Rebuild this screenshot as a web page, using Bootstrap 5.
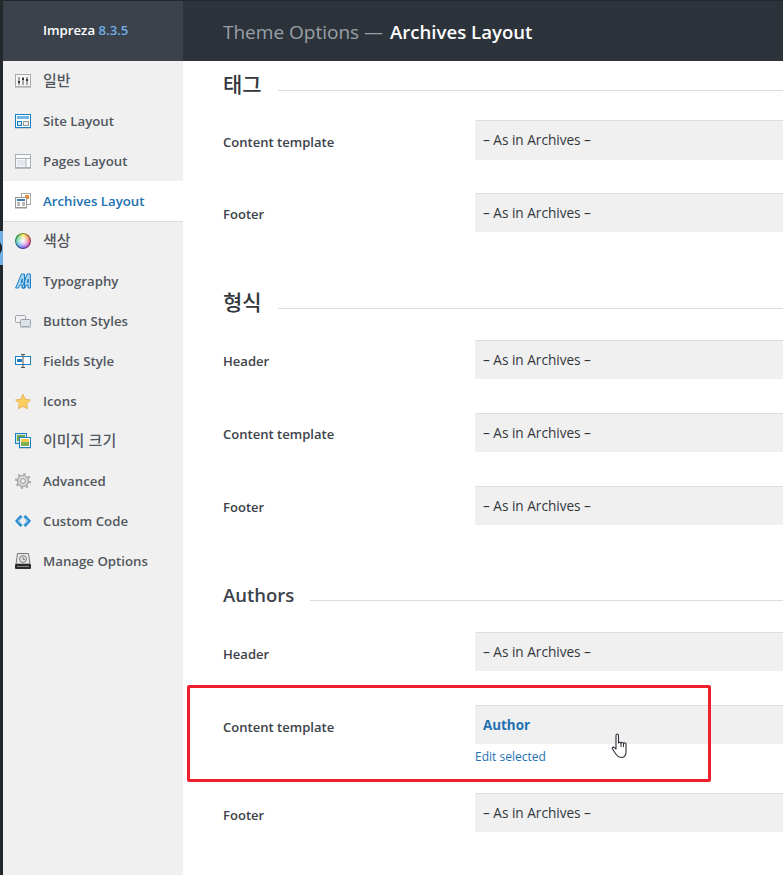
<!doctype html>
<html lang="ko"><head><meta charset="utf-8"><title>Theme Options</title>
<link href="https://cdn.jsdelivr.net/npm/bootstrap@5.3.0/dist/css/bootstrap.min.css" rel="stylesheet">
<style>
html,body{height:875px;overflow:hidden}
body{background:#fff;font-family:"Open Sans","Noto Sans CJK KR",sans-serif;color:#32373c;font-size:13px;position:relative}
.shell{height:875px;width:783px}
.wpbar{width:3px;flex:none;background:#23282d;position:relative}
.wpmark{position:absolute;left:0;top:231px;width:3px;height:34px;background:#72aee6;clip-path:polygon(0 0,100% 0,100% 100%,0 100%,0 23px,2px 19px,2px 15px,0 11px)}
.sidenav{width:180px;flex:none;background:#f0f0f0}
.logobox{height:61px;background:#3b424b;border-top:1px solid #23282d;color:#fff;font-weight:600;font-size:13.2px;padding-left:40px}
.logobox span{color:#72aee6}
.sideitem{height:40px;padding-left:12px;gap:12px;color:#50575e;font-weight:600;font-size:13.25px;text-decoration:none}
.sideitem svg,.wheel{flex:none}
.sideitem span{padding-top:1px}
.sideitem.is-on{background:#fff;color:#2271b1}
.sideitem span.ko{font-family:"Noto Sans CJK KR",sans-serif;font-weight:500;font-size:15px;margin-top:-2px;padding-top:0}
.sideitem span.wheel{width:16px;height:16px;border-radius:50%;padding:0;background:radial-gradient(circle,#fff 0,rgba(255,255,255,.65) 35%,rgba(255,255,255,0) 75%),conic-gradient(#f8e020,#f08020,#e82050,#b020c0,#5030e0,#2080e0,#20c0a0,#40c040,#f8e020);box-shadow:inset 0 0 0 1px rgba(40,40,40,.55)}
.divline{height:1px;background:#dcdcde;margin-bottom:-1px;position:relative}
.mainarea{min-width:0;flex:1 1 auto}
.topbar{height:61px;background:#2c333b;border-top:1px solid #23282d;padding:2px 0 0 40px;font-size:19px;color:#9aa0a6;white-space:nowrap}
.topbar b{color:#fff;font-weight:600;font-size:18.6px;margin-left:2px}
.body-pad{padding-left:40px}
.secttl{font-size:18.5px;font-weight:600;color:#3c434a;line-height:24px;gap:16px}
.secttl::after{content:"";flex:1;height:1px;background:#dcdcde;margin-top:17px}
.secttl.kr{font-family:"Noto Sans CJK KR",sans-serif;font-weight:500;font-size:21px;color:#32373c}
.secttl.kr::after{margin-top:19px}
.optrow{height:73px}
.optlabel{width:252px;flex:none;font-weight:600;font-size:13.05px;color:#3c434a;padding-top:13px}
.optlabel.nudge{padding-top:12px}
.fakeselect{height:39px;flex:1;background:#f0f0f0;border-top:1px solid #dcdcde;border-radius:2px 0 0 2px;padding:0 8px;color:#32373c;font-size:13.6px}
.fakeselect.tall{height:40px}
.fakeselect.pick{color:#2271b1;font-weight:700;font-size:13.4px}
.editlink{color:#2271b1;text-decoration:none;font-size:12px;line-height:16px;display:block;margin-top:5px}
.redbox{position:absolute;left:187px;top:685px;width:524px;height:97px;border:3px solid #f01f2d;border-radius:2px;pointer-events:none}
.handptr{position:absolute;left:611px;top:733px}
</style></head><body>
<div class="shell d-flex">
<div class="wpbar"><div class="wpmark"></div></div>
<nav class="sidenav">
<div class="logobox d-flex align-items-center">Impreza&nbsp;<span>8.3.5</span></div>
<a class="sideitem d-flex align-items-center" href="#"><svg width="16" height="14" viewBox="0 0 16 14"><rect x=".5" y=".5" width="15" height="12" fill="#f7f7f7" stroke="#aaa"/><rect y="13" width="16" height="1" fill="#c8c8c8"/><path d="M4 3v8M8 3v8M12 3v8" stroke="#555"/><path d="M3 7h2v2H3zM7 4h2v2H7zM11 5h2v2h-2z" fill="#333"/></svg><span class="ko">일반</span></a>
<a class="sideitem d-flex align-items-center" href="#"><svg width="16" height="15" viewBox="0 0 16 15"><rect x=".5" y=".5" width="15" height="13" fill="#fff" stroke="#1b7fc4"/><rect x="2" y="2" width="12" height="3" fill="#6fb7e8"/><rect x="2.500" y="7.500" width="4" height="4" fill="#cfe6f6" stroke="#1b7fc4"/><rect x="8.500" y="7.500" width="5" height="4" fill="#eee" stroke="#999"/><rect y="14" width="16" height="1" fill="#ccc"/></svg><span>Site Layout</span></a>
<a class="sideitem d-flex align-items-center" href="#"><svg width="16" height="15" viewBox="0 0 16 15"><rect x=".5" y=".5" width="15" height="13" fill="#fafafa" stroke="#a7aeb6"/><path d="M1 4.500h14M11 5v8" stroke="#a7aeb6"/><rect x="2" y="6" width="8" height="6" fill="#e4e8ee"/><rect y="14" width="16" height="1" fill="#bbb"/></svg><span>Pages Layout</span></a>
<a class="sideitem is-on d-flex align-items-center" href="#"><svg width="16" height="16" viewBox="0 0 16 16"><rect x="6.500" y=".5" width="9" height="11" fill="#fff" stroke="#aaa"/><rect x="10" y="2" width="4" height="4" fill="#e8902c"/><rect x=".5" y="4.500" width="11" height="10" fill="#fff" stroke="#999"/><rect x="2" y="6" width="8" height="2" fill="#3d78b8"/><path d="M2 10h3M2 12h3M7 10h3M7 12h3" stroke="#777"/><rect y="15" width="12" height="1" fill="#ccc"/></svg><span>Archives Layout</span></a>
<div class="divline"></div>
<a class="sideitem d-flex align-items-center" href="#"><span class="wheel"></span><span class="ko">색상</span></a>
<a class="sideitem d-flex align-items-center" href="#"><svg width="16" height="16" viewBox="0 0 16 16"><path fill-rule="evenodd" d="M.6 15 6.500 1H9.500v14H7v-3H5l-1.500 3zM6 9.500H7.200V6zM7.200 15 12 1h3.300l.3 14h-2.500v-3h-1.700l-1.300 3zM12.300 9.500h1V6z" fill="#a9d3f0" stroke="#1b7fc4" stroke-linejoin="round"/></svg><span>Typography</span></a>
<a class="sideitem d-flex align-items-center" href="#"><svg width="16" height="13" viewBox="0 0 16 13"><rect x=".5" y=".5" width="10" height="7" rx="1" fill="#f2f2f2" stroke="#9aa3ad"/><rect x="5.500" y="4.500" width="10" height="7" rx="1" fill="#dde3ea" stroke="#9aa3ad"/><rect x="5" y="12" width="11" height="1" fill="#ccc"/></svg><span>Button Styles</span></a>
<a class="sideitem d-flex align-items-center" href="#"><svg width="16" height="14" viewBox="0 0 16 14"><rect x=".5" y="2.500" width="15" height="8" fill="#fff" stroke="#1b7fc4"/><rect x="2" y="5" width="5" height="3" fill="#1b7fc4"/><path d="M8 1v12M6 .5h4M6 13.500h4" stroke="#555"/></svg><span>Fields Style</span></a>
<a class="sideitem d-flex align-items-center" href="#"><svg width="16" height="15" viewBox="0 0 16 15"><path d="M8 .5l2.300 4.800 5.200.7-3.800 3.600.9 5.200L8 12.300 3.400 14.800l.9-5.200L.5 6l5.200-.7z" fill="#fbcf5b" stroke="#e9b35f"/></svg><span>Icons</span></a>
<a class="sideitem d-flex align-items-center" href="#"><svg width="16" height="16" viewBox="0 0 16 16"><rect x=".5" y=".5" width="11" height="10" fill="#cfe6f6" stroke="#1b7fc4"/><rect x="2" y="2" width="8" height="6" fill="#6fa84a"/><rect x="4.500" y="4.500" width="11" height="10" fill="#fff" stroke="#1b7fc4"/><rect x="6" y="6" width="8" height="7" fill="#7fb050"/><rect x="6" y="6" width="8" height="3" fill="#f2c94c"/><rect x="4" y="15" width="12" height="1" fill="#ccc"/></svg><span class="ko">이미지 크기</span></a>
<a class="sideitem d-flex align-items-center" href="#"><svg width="16" height="16" viewBox="0 0 16 16"><circle cx="8" cy="8" r="5.500" fill="#d8d8d8" stroke="#a0a0a0" stroke-width="1.200"/><circle cx="8" cy="8" r="7" fill="none" stroke="#aaa" stroke-width="2" stroke-dasharray="2.400 3.100"/><circle cx="8" cy="8" r="2.400" fill="#f0f0f0" stroke="#999"/></svg><span>Advanced</span></a>
<a class="sideitem d-flex align-items-center" href="#"><svg width="16" height="12" viewBox="0 0 16 12"><path d="M6.500 1 2 6l4.500 5" fill="none" stroke="#2189d0" stroke-width="3"/><path d="M9.500 1 14 6l-4.500 5" fill="none" stroke="#2189d0" stroke-width="3"/><path d="M6 2.500 3 6l3 3.500M10 2.500 13 6l-3 3.500" fill="none" stroke="#bfe0f5" stroke-width=".7"/></svg><span>Custom Code</span></a>
<a class="sideitem d-flex align-items-center" href="#"><svg width="16" height="16" viewBox="0 0 16 16"><path d="M2.500.5h11L15 11H1z" fill="#e8e8e8" stroke="#777"/><circle cx="8" cy="6" r="3.400" fill="none" stroke="#777"/><path d="M8 4v2.300h2" stroke="#777" fill="none"/><rect y="11" width="16" height="5" rx="1" fill="#2b2b2b"/><rect x="2" y="13" width="12" height="1" fill="#888"/></svg><span>Manage Options</span></a>
</nav>
<main class="mainarea">
<div class="topbar d-flex align-items-center">Theme Options —&nbsp;<b>Archives Layout</b></div>
<div class="body-pad">
  <div class="secttl kr d-flex" style="margin-top:10px">태그</div>
  <div class="optrow d-flex" style="margin-top:25px"><div class="optlabel">Content template</div><div class="fakeselect tall d-flex align-items-center">– As in Archives –</div></div>
  <div class="optrow d-flex"><div class="optlabel nudge">Footer</div><div class="fakeselect d-flex align-items-center">– As in Archives –</div></div>
  <div class="secttl kr d-flex" style="margin-top:23px">형식</div>
  <div class="optrow d-flex" style="margin-top:27px"><div class="optlabel nudge">Header</div><div class="fakeselect d-flex align-items-center">– As in Archives –</div></div>
  <div class="optrow d-flex"><div class="optlabel nudge">Content template</div><div class="fakeselect d-flex align-items-center">– As in Archives –</div></div>
  <div class="optrow d-flex"><div class="optlabel nudge">Footer</div><div class="fakeselect d-flex align-items-center">– As in Archives –</div></div>
  <div class="secttl d-flex" style="margin-top:24px">Authors</div>
  <div class="optrow d-flex" style="margin-top:25px"><div class="optlabel">Header</div><div class="fakeselect d-flex align-items-center">– As in Archives –</div></div>
  <div class="optrow d-flex" style="height:88px"><div class="optlabel">Content template</div><div class="flex-fill"><div class="fakeselect pick d-flex align-items-center">Author</div><a class="editlink" href="#">Edit selected</a></div></div>
  <div class="optrow d-flex"><div class="optlabel">Footer</div><div class="fakeselect d-flex align-items-center">– As in Archives –</div></div>
</div>
</main>
</div>
<div class="redbox"></div>
<svg class="handptr" width="18" height="26" viewBox="0 0 18 26"><path d="M5 2.500c0-2 2.500-2 2.500 0V10c0-.8 2.400-1 2.500.2.200-1 2.400-1 2.500.3.400-1 2.500-.7 2.500.6V19c0 3.500-2 5.500-5 5.500-2.400 0-3.400-1-4.800-3L1.500 16c-1-1.400.8-2.600 2-1.400L5 16z" fill="#fff" stroke="#2b2f38" stroke-width="1.100" stroke-linejoin="round"/><path d="M10 10v4M12.500 10.500V14" stroke="#2b2f38"/></svg>
</body></html>
